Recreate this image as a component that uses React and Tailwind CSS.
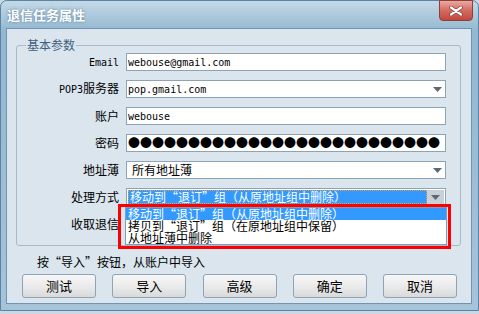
import React from 'react';

const CJK = '[font-family:"Noto_Sans_CJK_SC",sans-serif]';
const MONO = '[font-family:"DejaVu_Sans_Mono","Noto_Sans_CJK_SC",monospace]';

const ITEMS = [
    '移动到“退订”组（从原地址组中删除）',
    '拷贝到“退订”组（在原地址组中保留）',
    '从地址薄中删除',
];

const BUTTONS = ['测试', '导入', '高级', '确定', '取消'];

// old SimSun draws curly quotes full width; give them a 12px cell
function Zh({ text }) {
    return text.split(/([“”])/).map((part, i) => {
        if (part === '“') return <span key={i} className="inline-block w-[12px] text-right">“</span>;
        if (part === '”') return <span key={i} className="inline-block w-[12px] text-left">”</span>;
        return part;
    });
}

function Arrow() {
    return (
        <svg width="9" height="5" viewBox="0 0 9 5" className="shrink-0">
            <path d="M0 0h9L4.5 5z" fill="#5b6976" />
        </svg>
    );
}

function Row({ label, children }) {
    return (
        <div className="flex items-center h-[18px]">
            <div className="w-[102px] text-right text-[12px] leading-[14px] text-black">{label}</div>
            <div className="ml-[7px] w-[320px] h-[18px]">{children}</div>
        </div>
    );
}

function TextBox({ children, mono }) {
    return (
        <div className={`w-full h-full bg-white border border-[#8ea3b5] flex items-center pl-[1px] text-black ${mono ? 'text-[10px] ' + MONO : 'text-[12px]'}`}>
            {children}
        </div>
    );
}

function Combo({ children, mono, pad = 'pl-[1px]' }) {
    return (
        <div className={`w-full h-full bg-white border border-[#8ea3b5] flex items-center ${pad} pr-[3px] text-black`}>
            <span className={`flex-1 ${mono ? 'text-[10px] ' + MONO : 'text-[12px] leading-[14px]'}`}>{children}</span>
            <Arrow />
        </div>
    );
}

export default function App() {
    return (
        <div className={`w-[479px] h-[314px] bg-[#cbd8e3] overflow-hidden ${CJK}`} lang="zh-CN">
            <div className="h-[311px] rounded-t-[7px] border border-[#5c83a5] bg-gradient-to-b from-[#c4d9e7] via-[#92b7cf] via-[10%] to-[#a6c4da] flex flex-col">
                {/* title bar */}
                <div className="h-[27px] flex justify-between pl-[6px] pr-[5px]">
                    <span className="mt-[5px] text-[13px] leading-[18px] font-bold text-white [text-shadow:0_0_3px_#55799a]">退信任务属性</span>
                    <button className="w-[34px] h-[21px] -mt-[1px] rounded-b-[4px] border border-[#8c3f38] bg-gradient-to-b from-[#eaa9a2] via-[#d46b61] to-[#c4473d] flex items-center justify-center">
                        <svg width="14" height="10" viewBox="0 0 14 10">
                            <path d="M2 1.5L12 8.5M12 1.5L2 8.5" stroke="#7a3a35" strokeWidth="3.6" strokeLinecap="round" />
                            <path d="M2 1.5L12 8.5M12 1.5L2 8.5" stroke="#ffffff" strokeWidth="2.2" strokeLinecap="round" />
                        </svg>
                    </button>
                </div>

                {/* client area */}
                <div className="flex-1 ml-[5px] mr-[6px] mb-[6px] border border-[#7094b3] bg-[#dbe5ee] flex flex-col">
                    <fieldset className="mt-[9px] ml-[9px] mr-[10px] border border-[#a7bacb] rounded-[3px] pt-[1px] pb-[12px]">
                        <legend className="ml-[9px] px-[1px] text-[12px] leading-[14px] text-[#3f5f80]">基本参数</legend>
                        <div className="flex flex-col gap-[9px]">
                            <Row label={<span className={`text-[10px] ${MONO}`}>Email</span>}>
                                <TextBox mono>webouse@gmail.com</TextBox>
                            </Row>
                            <Row label={<><span className={`text-[10px] ${MONO}`}>POP3</span>服务器</>}>
                                <Combo mono>pop.gmail.com</Combo>
                            </Row>
                            <Row label="账户">
                                <TextBox mono>webouse</TextBox>
                            </Row>
                            <Row label="密码">
                                <TextBox>
                                    <span className="text-[12px] leading-[12px]">{'●'.repeat(26)}</span>
                                </TextBox>
                            </Row>
                            <Row label="地址薄">
                                <Combo pad="pl-[5px]">所有地址薄</Combo>
                            </Row>
                            <Row label="处理方式">
                                <div className="relative w-full h-full">
                                    <div className="w-full h-full bg-white border border-[#8ea3b5] flex p-[1px]">
                                        <div className="flex-1 bg-[#3399ff] border border-dotted border-[#e0a050] flex items-center text-white text-[12px] leading-[14px] pl-[1px] whitespace-nowrap">
                                            <span><Zh text={ITEMS[0]} /></span>
                                        </div>
                                        <div className="w-[17px] bg-[#c8d0d8] flex items-center justify-center">
                                            <Arrow />
                                        </div>
                                    </div>
                                    {/* annotation frame */}
                                    <div className="absolute left-[-8px] top-[16px] w-[333px] h-[45px] border-[3px] border-[#ff0000] z-10" />
                                    {/* open list */}
                                    <div className="absolute left-[-1px] top-[19px] w-[322px] h-[38px] bg-white border border-[#7f9db9] z-20 flex flex-col">
                                        {ITEMS.map((t, i) => (
                                            <div key={i} className={`h-[12px] leading-[12px] text-[12px] pl-[2px] whitespace-nowrap ${i === 0 ? 'bg-[#3399ff] text-white' : 'text-black'}`}>
                                                <Zh text={t} />
                                            </div>
                                        ))}
                                    </div>
                                </div>
                            </Row>
                            <Row label="收取退信">
                                <TextBox />
                            </Row>
                        </div>
                    </fieldset>

                    <div className="mt-[9px] pl-[30px] text-[12px] leading-[14px] text-black">
                        <Zh text="按“导入”按钮，从账户中导入" />
                    </div>

                    <div className="mt-[5px] pl-[15px] pr-[14px] flex justify-between">
                        {BUTTONS.map(b => (
                            <button key={b} className="w-[74px] h-[24px] rounded-[3px] border border-[#8da3b6] bg-gradient-to-b from-[#f7f7f7] via-[#ebebeb] to-[#d9dadb] text-[13px] leading-[16px] text-black">
                                {b}
                            </button>
                        ))}
                    </div>
                </div>
            </div>
        </div>
    );
}
